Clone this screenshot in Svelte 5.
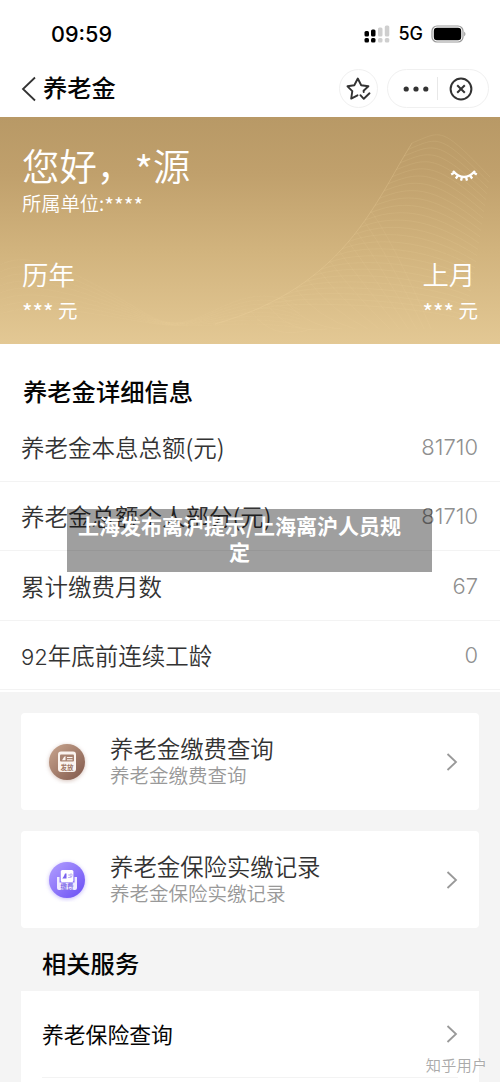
<script>
  const details = [
    { label: '养老金本息总额(元)', value: '81710' },
    { label: '养老金总额个人部分(元)', value: '81710' },
    { label: '累计缴费月数', value: '67' },
    { number: '92', label: '年底前连续工龄', value: '0' }
  ];

  const cards = [
    { title: '养老金缴费查询', sub: '养老金缴费查询', icon: 'pay' },
    { title: '养老金保险实缴记录', sub: '养老金保险实缴记录', icon: 'record' }
  ];

  // point on the slope that the banner lines start from
  function slope(t) {
    const u = 1 - t;
    const x = u * u * u * 412 + 3 * u * u * t * 375 + 3 * u * t * t * 345 + t * t * t * 215;
    const y = u * u * u * 26 + 3 * u * u * t * 85 + 3 * u * t * t * 170 + t * t * t * 207;
    return [x, y];
  }

  const waves = Array.from({ length: 26 }, (_, i) => {
    const [x, y] = slope(i / 28);
    return `M${x} ${y} C${x + 30} ${y - 12} ${440 - i} ${y - 18 + i / 2} ${490 - i} ${y + 34 - i}`;
  });
  const folds = Array.from({ length: 12 }, (_, i) => {
    const [x, y] = slope(0.35 + i / 20);
    return `M${x} ${y} Q${x + 22} ${y + 30} ${x + 60} 212`;
  });
  const ripples = Array.from({ length: 8 }, (_, i) =>
    `M0 ${148 + i * 7} C35 ${128 + i * 8} 100 ${170 + i * 4} 150 ${199 + i} S235 ${152 + i * 7} 300 ${190 + i * 3}`
  );
</script>

<div class="page">
  <header>
    <div class="status">
      <span class="time">09:59</span>
      <div class="signals">
        <svg width="27" height="18" viewBox="0 0 27 18">
          <g fill="#000">
            <rect x="0.5" y="6" width="4.5" height="5.5" rx="1.5" />
            <rect x="7" y="4.5" width="4.5" height="7" rx="1.5" />
            <rect x="0.5" y="13" width="4.5" height="4.5" rx="1.5" />
            <rect x="7" y="13" width="4.5" height="4.5" rx="1.5" />
          </g>
          <g fill="#cfcfcf">
            <rect x="14" y="2.5" width="4.5" height="9" rx="1.5" />
            <rect x="20.8" y="0.5" width="4.5" height="11" rx="1.5" />
            <rect x="14" y="13" width="4.5" height="4.5" rx="1.5" />
            <rect x="20.8" y="13" width="4.5" height="4.5" rx="1.5" />
          </g>
        </svg>
        <span class="net">5G</span>
        <svg width="36" height="18" viewBox="0 0 36 18">
          <rect x="1" y="1" width="31" height="16" rx="5" fill="none" stroke="#999" stroke-width="1.2" />
          <rect x="2.8" y="2.8" width="27.4" height="12.4" rx="3.2" />
          <path d="M33.3 6.5Q35.5 9 33.3 11.5Z" fill="#888" />
        </svg>
      </div>
    </div>
    <div class="nav">
      <svg class="back" width="16" height="26" viewBox="0 0 16 26">
        <path d="M14 1.5L2 13L14 24.5" fill="none" stroke="#333" stroke-width="1.8" />
      </svg>
      <h1>养老金</h1>
      <div class="star">
        <svg width="26" height="26" viewBox="0 0 26 26" fill="none" stroke="#333" stroke-width="1.9" stroke-linejoin="round" stroke-linecap="round">
          <path d="M11.5 19.3L5.2 22.6L6.3 15.2L1.5 10.3L8.3 9.2L11.8 2.5L15.2 9.2L22.4 10.3L17.6 14.8L17.7 16" />
          <path d="M14.4 19.2L17.8 22.8L23.5 17.3" />
        </svg>
      </div>
      <div class="capsule">
        <svg width="26" height="6" viewBox="0 0 26 6" fill="#333">
          <circle cx="3.2" cy="3" r="2.6" />
          <circle cx="13" cy="3" r="2.6" />
          <circle cx="22.8" cy="3" r="2.6" />
        </svg>
        <i></i>
        <svg width="24" height="24" viewBox="0 0 24 24" fill="none" stroke="#333" stroke-width="2">
          <circle cx="12" cy="12" r="10.4" />
          <path d="M8.2 8.2L15.8 15.8M15.8 8.2L8.2 15.8" />
        </svg>
      </div>
    </div>
  </header>

  <section class="banner">
    <svg class="waves" width="500" height="227" viewBox="0 0 500 227" fill="none" stroke="#f2d8a2">
      <path d="M412 26C375 85 345 170 215 207" opacity="0.25" />
      {#each waves as d}<path {d} opacity="0.13" />{/each}
      {#each folds as d}<path {d} opacity="0.1" />{/each}
      {#each ripples as d}<path {d} opacity="0.08" />{/each}
    </svg>
    <div class="hello">
      <div>
        <div class="name">您好，<span class="mask">*</span>源</div>
        <div class="unit">所属单位:<span class="mask">****</span></div>
      </div>
      <svg class="eye" width="28" height="14" viewBox="0 0 28 14" fill="none" stroke="#fff" stroke-width="2.3">
        <path d="M3 2Q14 14 25 2" />
        <path d="M4.5 3.5L1.2 5.5M8 6.5L5.8 9.5M12 8L11 11.6M16 8L17 11.6M20 6.5L22.2 9.5M23.5 3.5L26.8 5.5" />
      </svg>
    </div>
    <div class="sums">
      <div>
        <div class="when">历年</div>
        <div class="sum"><span class="mask">***</span> 元</div>
      </div>
      <div>
        <div class="when">上月</div>
        <div class="sum"><span class="mask">***</span> 元</div>
      </div>
    </div>
  </section>

  <section class="details">
    <h2>养老金详细信息</h2>
    {#each details as row}
      <div class="row">
        <span>{#if row.number}<span class="num">{row.number}</span>{/if}{row.label}</span>
        <span class="value">{row.value}</span>
      </div>
    {/each}
    <div class="notice">上海发布离沪提示/上海离沪人员规定</div>
  </section>

  <section class="cards">
    {#each cards as card}
      <div class="card">
        {#if card.icon === 'pay'}
          <svg class="icon" width="44" height="44" viewBox="0 0 44 44">
            <defs>
              <linearGradient id="brown" x1="0" y1="0" x2="1" y2="1">
                <stop offset="0" stop-color="#c9a68f" />
                <stop offset="1" stop-color="#80574a" />
              </linearGradient>
            </defs>
            <circle class="brown" cx="22" cy="22" r="18" fill="url(#brown)" />
            <rect x="13" y="11.5" width="18" height="20.5" rx="3" fill="#fbf4ef" />
            <rect x="15" y="14.5" width="14" height="7" rx="1" fill="#a98472" />
            <path d="M17 20.3L19 17L20.5 16V20.3Z M22 17H27.5V18H22Z M22 19.2H27.5V20.2H22Z" fill="#fbf4ef" />
            <text x="22" y="29.5" text-anchor="middle" fill="#a07865">发放</text>
          </svg>
        {:else}
          <svg class="icon" width="44" height="44" viewBox="0 0 44 44">
            <defs>
              <linearGradient id="violet" x1="0" y1="0" x2="1" y2="1">
                <stop offset="0" stop-color="#b3a0ff" />
                <stop offset="1" stop-color="#684df4" />
              </linearGradient>
            </defs>
            <circle class="violet" cx="22" cy="22" r="18" fill="url(#violet)" />
            <path d="M12 19H14.5V24.5H29.5V19H32V30Q32 32 30 32H14Q12 32 12 30Z" fill="#f0ecff" />
            <rect x="15.8" y="12" width="12.6" height="12" rx="1.5" fill="#fff" />
            <path d="M17.3 20.5L19 18L20 15.5H21.5V20.5Z" fill="#7963ee" />
            <path d="M23 17H25M23 19.5H26.5M25.2 16H27V18.5H25.2Z" fill="none" stroke="#a99aef" stroke-width="0.7" />
            <text x="22" y="30.8" text-anchor="middle" fill="#8370e8">缴费</text>
          </svg>
        {/if}
        <div class="text">
          <div class="title">{card.title}</div>
          <div class="sub">{card.sub}</div>
        </div>
        <svg class="arrow" width="12" height="20" viewBox="0 0 12 20"><path d="M1.5 2L10 10L1.5 18" /></svg>
      </div>
    {/each}

    <h2>相关服务</h2>
    <div class="services">
      <div class="service">
        <span>养老保险查询</span>
        <svg class="arrow" width="12" height="20" viewBox="0 0 12 20"><path d="M1.5 2L10 10L1.5 18" /></svg>
      </div>
    </div>
  </section>
  <div class="watermark">知乎用户</div>
</div>

<style>
  :global(body) {
    margin: 0;
    background: #fff;
  }

  .page {
    position: relative;
    width: 500px;
    height: 1082px;
    overflow: hidden;
    background: #f4f4f4;
    font-family: "Noto Sans CJK SC", sans-serif;
    color: #333;
    white-space: nowrap;
  }

  svg {
    display: block;
    flex: none;
  }

  h1, h2 {
    margin: 0;
    color: #050505;
    font-size: 24.3px;
    font-weight: 500;
  }

  header {
    height: 117px;
    background: #fff;
  }

  .status {
    display: flex;
    align-items: center;
    justify-content: space-between;
    box-sizing: border-box;
    height: 60px;
    padding: 7px 33px 0 51px;
    font-family: Inter, sans-serif;
    color: #000;
  }

  .time {
    font-size: 21.6px;
    font-weight: 550;
  }

  .signals {
    display: flex;
    align-items: center;
  }

  .net {
    margin: 0 8px 0 7px;
    font-size: 18px;
    font-weight: 450;
  }

  .nav {
    display: flex;
    align-items: center;
    height: 57px;
    padding: 0 11px 0 21px;
  }

  .nav h1 {
    margin: -4px 0 0 6px;
    line-height: 36px;
  }

  .star, .capsule {
    display: flex;
    align-items: center;
    box-sizing: border-box;
    height: 39px;
    border: 1px solid #f0f0f0;
    border-radius: 20px;
  }

  .star {
    justify-content: center;
    width: 39px;
    margin-left: auto;
  }

  .capsule {
    width: 102px;
    margin-left: 9px;
    padding-left: 15px;
  }

  .capsule i {
    width: 1px;
    height: 23px;
    margin: 0 11px 0 8px;
    background: #e8e8e8;
  }

  .banner {
    position: relative;
    box-sizing: border-box;
    height: 227px;
    padding: 23px 22px 0;
    background: linear-gradient(#b89966, #c0a06c 25%, #d2b47e 60%, #e3c894);
    color: #fff;
    font-weight: 350;
  }

  .waves {
    position: absolute;
    left: 0;
    top: 0;
  }

  .hello, .sums {
    position: relative;
    display: flex;
    justify-content: space-between;
  }

  .name {
    font-size: 37.4px;
    line-height: 50px;
  }

  .unit {
    font-size: 19.3px;
    line-height: 26px;
  }

  .mask {
    position: relative;
    top: 0.14em;
    font-size: 1.1em;
    line-height: 1;
  }

  .sum .mask {
    font-size: 1.16em;
  }

  .eye {
    margin-top: 29px;
  }

  .sums {
    margin-top: 39px;
  }

  .when {
    font-size: 26.4px;
    line-height: 38px;
  }

  .sum {
    font-size: 19.5px;
    font-weight: 400;
    line-height: 34px;
  }

  .details {
    position: relative;
    height: 348px;
    background: #fff;
  }

  .details h2 {
    padding: 26px 0 0 23px;
    line-height: 42px;
  }

  .row {
    display: flex;
    align-items: center;
    justify-content: space-between;
    box-sizing: border-box;
    height: 69.5px;
    padding: 1px 22px 0 21px;
    border-bottom: 1px solid #f3f3f3;
    font-size: 23.5px;
    font-weight: 350;
  }

  .num, .value {
    font-family: Inter, sans-serif;
    font-size: 22px;
    font-weight: 350;
  }

  .value {
    color: #8f8f8f;
  }

  .notice {
    position: absolute;
    left: 67px;
    top: 165px;
    box-sizing: border-box;
    width: 365px;
    height: 63px;
    padding: 3px 28px 0 8px;
    background: rgba(0, 0, 0, 0.375);
    color: #fff;
    font-size: 21px;
    font-weight: 700;
    line-height: 26px;
    text-align: center;
    white-space: normal;
    word-break: break-all;
  }

  .cards {
    padding: 21px 21px 0;
  }

  .card {
    display: flex;
    align-items: center;
    height: 97px;
    margin-bottom: 21px;
    padding: 0 21px 0 24px;
    border-radius: 4px;
    background: #fff;
  }

  .icon text {
    font-size: 6.5px;
    font-weight: 700;
  }

  .brown {
    filter: drop-shadow(0 1px 2px rgba(150, 100, 80, 0.4));
  }

  .violet {
    filter: drop-shadow(0 1px 2px rgba(105, 77, 244, 0.4));
  }

  .text {
    margin: -1px 0 0 21px;
  }

  .title {
    font-size: 23.4px;
    font-weight: 350;
    line-height: 28px;
  }

  .sub {
    color: #999;
    font-size: 19.5px;
    font-weight: 350;
    line-height: 26px;
  }

  .arrow {
    margin-left: auto;
    fill: none;
    stroke: #999;
    stroke-width: 1.8;
  }

  .cards h2 {
    padding-left: 21px;
    line-height: 28px;
  }

  .services {
    height: 120px;
    margin-top: 14px;
    padding: 0 21px;
    background: #fff;
  }

  .service {
    display: flex;
    align-items: center;
    box-sizing: border-box;
    height: 87px;
    border-bottom: 1px solid #f3f3f3;
    color: #050505;
    font-size: 21.8px;
  }

  .service span {
    margin-top: -2px;
  }

  .watermark {
    position: absolute;
    right: 13px;
    bottom: 7px;
    color: #aaa;
    font-size: 15.3px;
    font-weight: 350;
    line-height: 22px;
    text-shadow: -1px -1px 0 #fff;
  }
</style>
